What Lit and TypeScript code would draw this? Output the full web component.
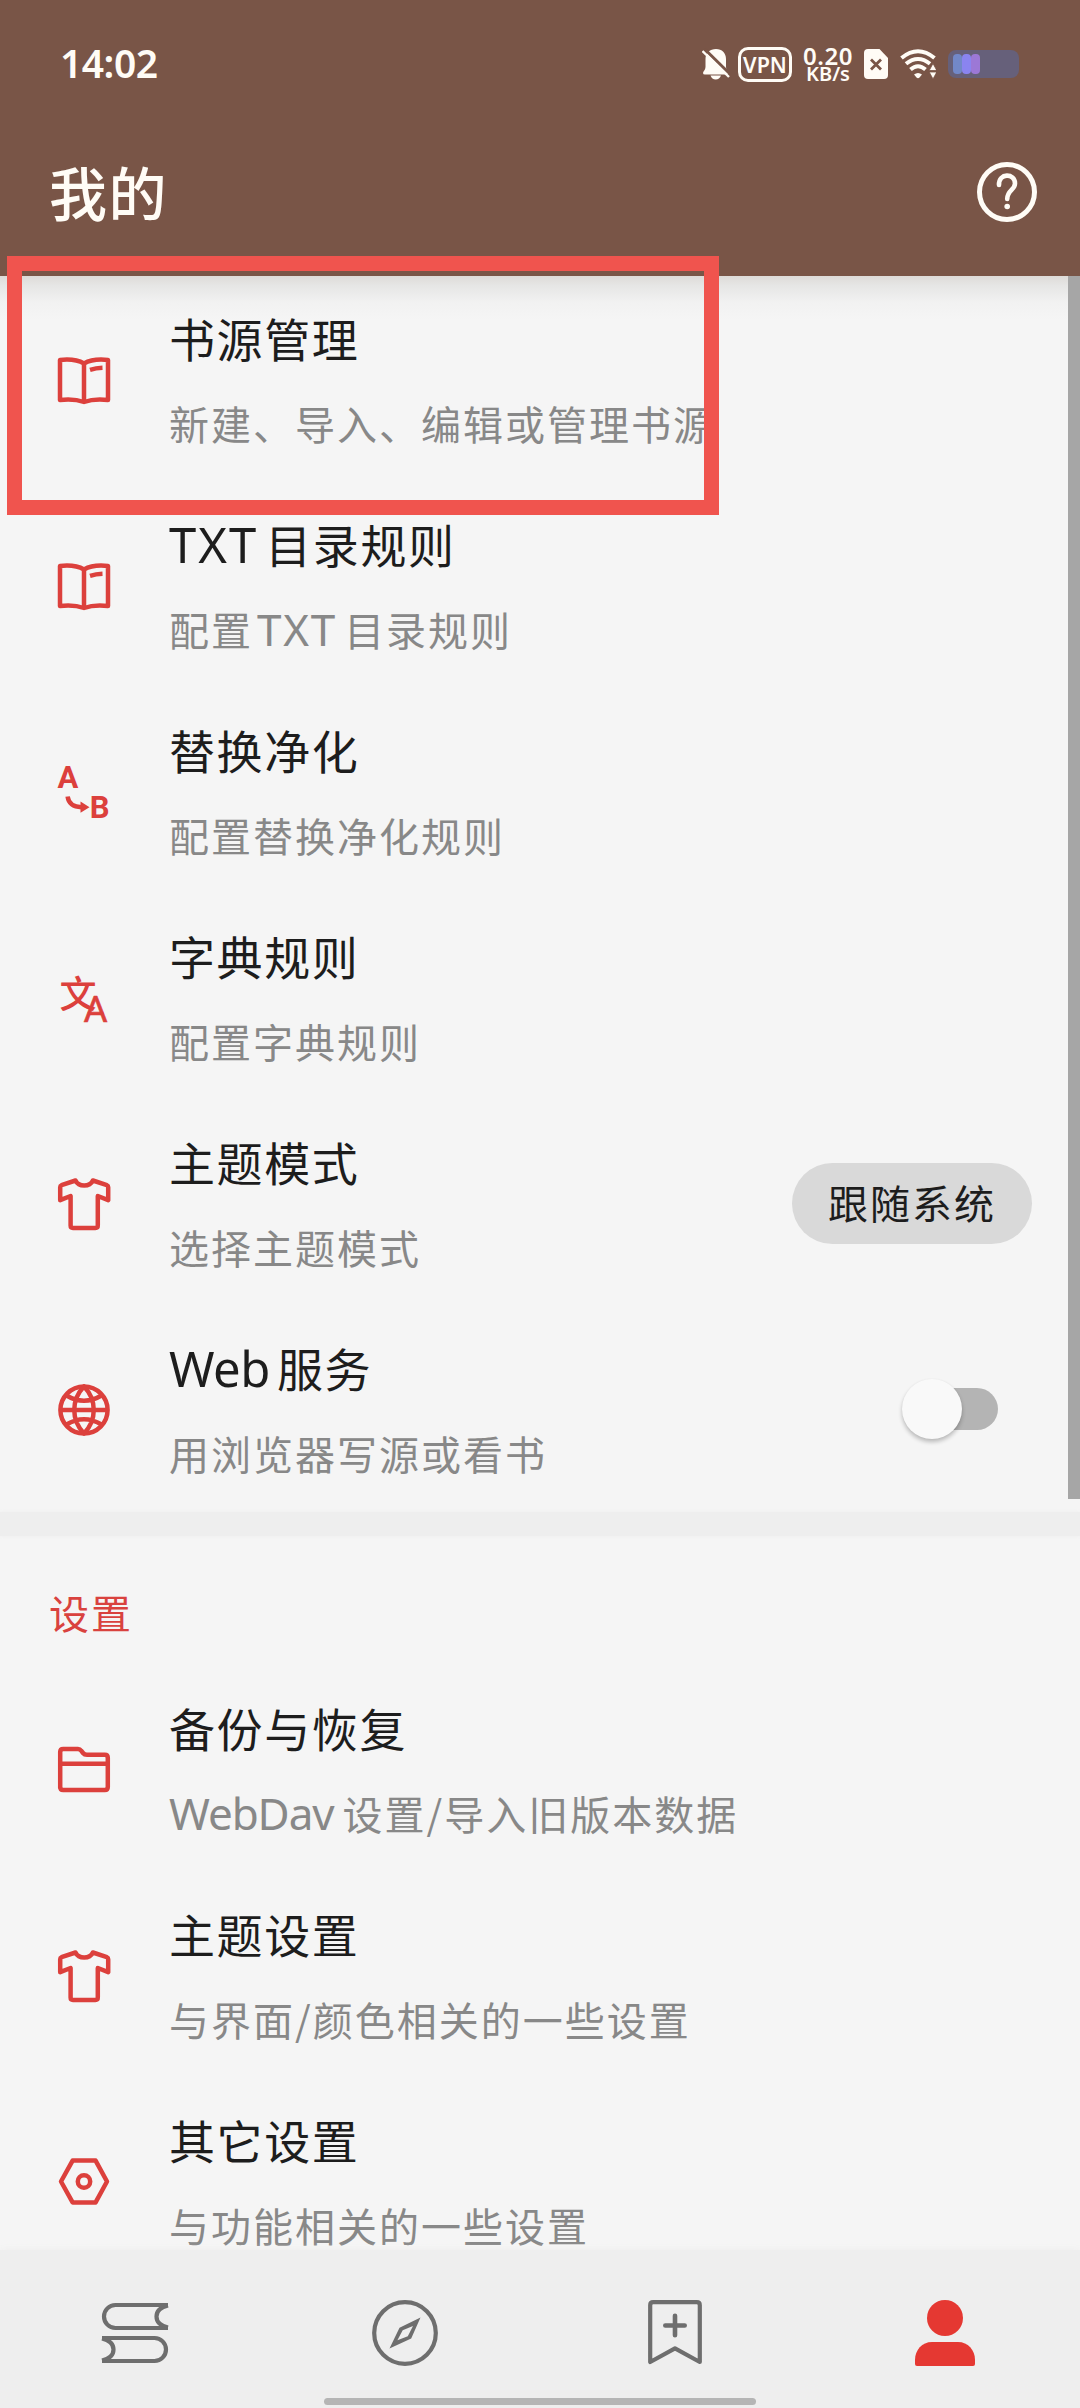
import { LitElement, html, css, svg, TemplateResult, nothing } from "lit";
import { customElement, property } from "lit/decorators.js";

const icons: Record<string, TemplateResult> = {
  book: svg`<path d="M6 11C15 10 23 10.5 30 14.5C37 10.5 45 10 54 11V51C45 50 37 50.5 30 53C23 50.5 15 50 6 51Z M30 14V53"/><path d="M36 20.8Q42 19 48.5 18.8"/>`,
  replace: svg`<text class="ab" x="3.6" y="27.2">A</text><text class="ab" x="35.8" y="57.4">B</text><path d="M13.6 35.5C14.5 42 19 46 27.5 46.2" stroke-linecap="butt"/><path class="solid" d="M26.5 40.5L35.5 46.2L26.5 51.8Z"/>`,
  translate: svg`<text class="wen" x="5.4" y="41.4">文</text><text class="la" x="29.6" y="54.6">A</text>`,
  shirt: svg`<path d="M21.5 7.5L7.5 12.2Q6.2 12.8 6.2 14.2V27.2L16.6 23V52.6Q16.6 55 19 55H41.4Q43.8 55 43.8 52.6V23L54.2 27.2V14.2Q54.2 12.8 52.9 12.2L38.9 7.5Q36.5 12.6 30.2 12.6T21.5 7.5Z"/>`,
  globe: svg`<circle cx="30" cy="31" r="23.6"/><path d="M6 31H54M30 7.5C17 21 17 41 30 54.5C43 41 43 21 30 7.5ZM12.5 16.5Q30 27 47.5 16.5M12.5 45.5Q30 35 47.5 45.5"/>`,
  folder: svg`<path d="M6.2 49V13Q6.2 10 9.2 10H24Q26 10 27.2 11.7L29 14Q30.4 15.8 33 15.8H50.8Q53.8 15.8 53.8 18.8V48Q53.8 51 50.8 51H9.2Q6.2 51 6.2 48ZM6.2 24.8H53.8"/>`,
  hex: svg`<path d="M18.6 9.6H41.6L53 30.5L41.6 51.4H18.6L7 30.5Z"/><circle cx="30" cy="30.5" r="6.2"/>`,
};

@customElement("pref-row")
class PrefRow extends LitElement {
  @property() icon = "";
  @property() heading = "";
  @property() summary = "";

  static styles = css`
    :host {
      flex: none;
      box-sizing: border-box;
      height: 206px;
      display: flex;
      align-items: center;
      padding: 0 48px 0 54px;
    }
    svg { flex: none; width: 60px; height: 60px; fill: none; stroke: #dc403c; stroke-width: 4.5; stroke-linejoin: round; }
    svg .solid { fill: #dc403c; stroke: none; }
    svg text { fill: #dc403c; stroke: none; }
    .ab { font: 700 31px Roboto, sans-serif; }
    .wen { font: 500 37px "Noto Sans CJK SC", sans-serif; }
    svg .la { font: 400 37px Roboto, sans-serif; stroke: #dc403c; stroke-width: 0.6px; }
    .text {
      flex: 1;
      margin-left: 55px;
      display: flex;
      flex-direction: column;
      gap: 18px;
      white-space: nowrap;
    }
    .title { font-size: 46px; line-height: 70px; letter-spacing: 1.6px; color: #1d1d1d; }
    .sub { font-size: 40px; line-height: 66px; letter-spacing: 2px; color: #888; }
    .lat { font-family: "Noto Sans", sans-serif; line-height: 1; }
    .title .lat { font-size: 49px; letter-spacing: -0.5px; margin-right: 7px; }
    .sub .lat { font-size: 44px; letter-spacing: -1.1px; margin-right: 9px; }
    .title .lat.caps { letter-spacing: 2px; }
    .sub .lat.caps { letter-spacing: 1.8px; margin: 0 7px 0 4px; }
  `;

  private mixed(text: string) {
    return text
      .split(/([A-Za-z]+)/)
      .filter(Boolean)
      .map((part) =>
        /^[A-Za-z]/.test(part)
          ? html`<span class="lat ${part === part.toUpperCase() ? "caps" : ""}">${part}</span>`
          : part
      );
  }

  render() {
    return html`
      <svg viewBox="0 0 60 60">${icons[this.icon]}</svg>
      <div class="text">
        <div class="title">${this.mixed(this.heading)}</div>
        <div class="sub">${this.mixed(this.summary)}</div>
      </div>
      <slot></slot>
    `;
  }
}

type Pref = { icon: string; title: string; sub: string; widget?: "pill" | "switch" };

const general: Pref[] = [
  { icon: "book", title: "书源管理", sub: "新建、导入、编辑或管理书源" },
  { icon: "book", title: "TXT目录规则", sub: "配置TXT目录规则" },
  { icon: "replace", title: "替换净化", sub: "配置替换净化规则" },
  { icon: "translate", title: "字典规则", sub: "配置字典规则" },
  { icon: "shirt", title: "主题模式", sub: "选择主题模式", widget: "pill" },
  { icon: "globe", title: "Web服务", sub: "用浏览器写源或看书", widget: "switch" },
];

const settings: Pref[] = [
  { icon: "folder", title: "备份与恢复", sub: "WebDav设置/导入旧版本数据" },
  { icon: "shirt", title: "主题设置", sub: "与界面/颜色相关的一些设置" },
  { icon: "hex", title: "其它设置", sub: "与功能相关的一些设置" },
];

@customElement("app-root")
class AppRoot extends LitElement {
  static styles = css`
    :host {
      display: flex;
      flex-direction: column;
      position: relative;
      width: 1080px;
      height: 2408px;
      overflow: hidden;
      background: #f5f5f5;
      font-family: "Noto Sans CJK SC", sans-serif;
    }
    .head { flex: none; height: 276px; background: #795547; color: #fffcf6; display: flex; flex-direction: column; }
    .status { height: 128px; display: flex; align-items: center; padding: 0 61px 0 60px; font-family: "Noto Sans", sans-serif; }
    .clock { font-size: 39px; font-weight: 600; letter-spacing: -0.5px; flex: 1; padding-bottom: 3px; }
    .tray { display: flex; align-items: center; }
    .bell { width: 28px; height: 32px; margin-right: 8px; }
    .vpn {
      box-sizing: border-box; width: 54px; height: 35px; border: 3px solid #fffcf6; border-radius: 10px;
      font-size: 21.5px; font-weight: 600; line-height: 30px; text-align: center; margin-right: 11px;
    }
    .speed { width: 50px; text-align: center; font-weight: 600; display: flex; flex-direction: column; margin-right: 11px; }
    .speed .num { font-size: 24px; line-height: 19px; letter-spacing: 0.5px; }
    .speed .unit { font-size: 20px; line-height: 18px; }
    .sim { width: 24px; height: 30px; margin-right: 12px; }
    .wifi { width: 36px; height: 30px; margin-right: 12px; }
    .battery { box-sizing: border-box; width: 71px; height: 28px; border-radius: 8px; background: #66607a; padding: 4px 5px; display: flex; }
    .cell { width: 9px; height: 20px; border-radius: 4px; background: #7288c8; }
    .cell.b { background: #8a84f0; }
    .cell.c { background: #9c78d6; }
    .bar { flex: 1; display: flex; align-items: center; justify-content: space-between; padding: 0 43px 20px 49px; }
    .bar .name { font-size: 58px; font-weight: 500; letter-spacing: 1.4px; line-height: 80px; padding-bottom: 3px; }
    .help { width: 60px; height: 60px; }
    .content { flex: 1; min-height: 0; overflow: hidden; display: flex; flex-direction: column; position: relative; }
    .content::before {
      content: ""; position: absolute; left: 0; top: 0; right: 0; height: 44px;
      background: linear-gradient(#dedbd8, #e6e6e5 22%, rgba(240, 240, 240, 0.7) 60%, rgba(245, 245, 245, 0));
    }
    .content pref-row { position: relative; }
    .scroll { position: absolute; right: 0; top: 0; width: 12px; height: 1223px; background: #a6a6a6; }
    .gap { flex: none; height: 24px; background: #eee; box-shadow: 0 0 4px #eee; }
    .category { flex: none; height: 130px; box-sizing: border-box; padding: 43px 49px 0; font-size: 40px; line-height: 66px; letter-spacing: 2px; color: #d9423e; }
    .pill { width: 240px; height: 81px; border-radius: 41px; background: #d9d9d9; color: #1d1d1d; font-size: 40px; letter-spacing: 2px; line-height: 79px; text-align: center; }
    .switch { width: 84px; height: 42px; margin-right: 34px; border-radius: 21px; background: #b4b4b4; display: flex; align-items: center; }
    .thumb { flex: none; width: 60px; height: 60px; margin-left: -12px; border-radius: 50%; background: #f9f9f9; box-shadow: 0 3px 4px rgba(0, 0, 0, 0.24), 0 0 2px rgba(0, 0, 0, 0.04); }
    .nav { flex: none; height: 158px; background: #eee; box-shadow: 0 0 7px #eee; position: relative; display: flex; }
    .tab { flex: 1; display: flex; justify-content: center; padding-top: 47px; }
    .tab svg { width: 72px; height: 72px; fill: none; stroke: #6e6e6e; stroke-width: 4.2; }
    .handle { position: absolute; left: 324px; bottom: 3px; width: 432px; height: 7px; border-radius: 4px; background: #b5b5b5; }
    .frame { position: absolute; box-sizing: border-box; left: 7px; top: 256px; width: 712px; height: 259px; border: 15px solid #f0544e; }
  `;

  private row(p: Pref) {
    return html`<pref-row .icon=${p.icon} .heading=${p.title} .summary=${p.sub}>
      ${p.widget === "pill" ? html`<div class="pill">跟随系统</div>` : nothing}
      ${p.widget === "switch" ? html`<div class="switch"><div class="thumb"></div></div>` : nothing}
    </pref-row>`;
  }

  render() {
    return html`
      <header class="head">
        <div class="status">
          <div class="clock">14:02</div>
          <div class="tray">
            <svg class="bell" viewBox="0 0 28 32">
              <path fill="#fffcf6" d="M14 1C20 1 24 5 24 11V19C24 22 26 23 26 25Q26 26.5 25 26.5H3Q1 26.5 1 25C1 23 3.5 22 3.5 19V11C3.5 5 8 1 14 1ZM8.5 27.5H19Q17.5 31.5 13.7 31.5T8.5 27.5Z"/>
              <path d="M2 0.5L28.5 26.5" stroke="#795547" stroke-width="3"/>
              <path d="M0.5 3L27 29" stroke="#fffcf6" stroke-width="2.4"/>
            </svg>
            <div class="vpn">VPN</div>
            <div class="speed"><span class="num">0.20</span><span class="unit">KB/s</span></div>
            <svg class="sim" viewBox="0 0 24 30">
              <path fill="#fffcf6" d="M4 0H15.5L24 9V26Q24 30 20 30H4Q0 30 0 26V4Q0 0 4 0Z"/>
              <path d="M7 10.5L17 20.5M17 10.5L7 20.5" stroke="#795547" stroke-width="2.8"/>
            </svg>
            <svg class="wifi" viewBox="0 0 36 30">
              <g fill="none" stroke="#fffcf6" stroke-width="4">
                <path d="M1.5 9Q18 -4.5 34.5 9"/>
                <path d="M6 14.8Q18 5.2 30 14.8"/>
                <path d="M10.5 20.5Q18 14 25.5 20.5"/>
              </g>
              <path fill="#fffcf6" d="M14 25.5Q18 22.5 22 25.5L19.5 28.5Q18 30 16.5 28.5Z"/>
              <path fill="#fffcf6" stroke="#795547" stroke-width="0.8" d="M33 14.5L36.8 21.5H29.2ZM33 30L36.8 23H29.2Z"/>
            </svg>
            <div class="battery"><i class="cell"></i><i class="cell b"></i><i class="cell c"></i></div>
          </div>
        </div>
        <div class="bar">
          <div class="name">我的</div>
          <svg class="help" viewBox="0 0 60 60" fill="none" stroke="#fffcf6">
            <circle cx="30" cy="30" r="27.5" stroke-width="5"/>
            <path d="M22 23C21.5 10.5 38 11 38 21.5C38 28 30.2 28 30.2 37" stroke-width="4.6" stroke-linecap="round"/>
            <circle cx="30.2" cy="44.5" r="2.8" fill="#fffcf6" stroke="none"/>
          </svg>
        </div>
      </header>
      <main class="content">
        ${general.map((p) => this.row(p))}
        <div class="gap"></div>
        <div class="category">设置</div>
        ${settings.map((p) => this.row(p))}
        <div class="scroll"></div>
      </main>
      <nav class="nav">
        <div class="tab"><svg viewBox="0 0 72 72">
          <path d="M69 8H16.5a11.5 11.5 0 0 0 0 23H69M69 8.5C60.5 10.5 57.5 14.5 57.5 19.5S60.5 28.5 69 30.5"/>
          <path d="M3 41H55.5a11.5 11.5 0 0 1 0 23H3M3 41.5C11.5 43.5 14.5 47.5 14.5 52.5S11.5 61.5 3 63.5"/>
        </svg></div>
        <div class="tab"><svg viewBox="0 0 72 72">
          <circle cx="36" cy="36" r="30.8"/>
          <path fill="#6e6e6e" stroke="none" fill-rule="evenodd" d="M51.5 20.5L42.2 41.5L20.5 51.5L30.5 30.7ZM33.7 33.2L28.4 43.2L38.8 39.2L44 29Z"/>
        </svg></div>
        <div class="tab"><svg viewBox="0 0 72 72">
          <path stroke-linejoin="round" d="M14.2 5.2H57.8Q60.8 5.2 60.8 8.2V65L36 51.3L11.2 65V8.2Q11.2 5.2 14.2 5.2Z"/>
          <path stroke-linecap="round" stroke-width="4.6" d="M26.3 28.5H45.7M36 18.7V38.3"/>
        </svg></div>
        <div class="tab"><svg viewBox="0 0 72 72">
          <g fill="#e53832" stroke="none"><circle cx="36" cy="21" r="18"/>
          <path d="M8 69Q6 69 6 67V63C6 53 13 45 23 45H49C59 45 66 53 66 63V67Q66 69 64 69Z"/></g>
        </svg></div>
        <div class="handle"></div>
      </nav>
      <div class="frame"></div>
    `;
  }
}
